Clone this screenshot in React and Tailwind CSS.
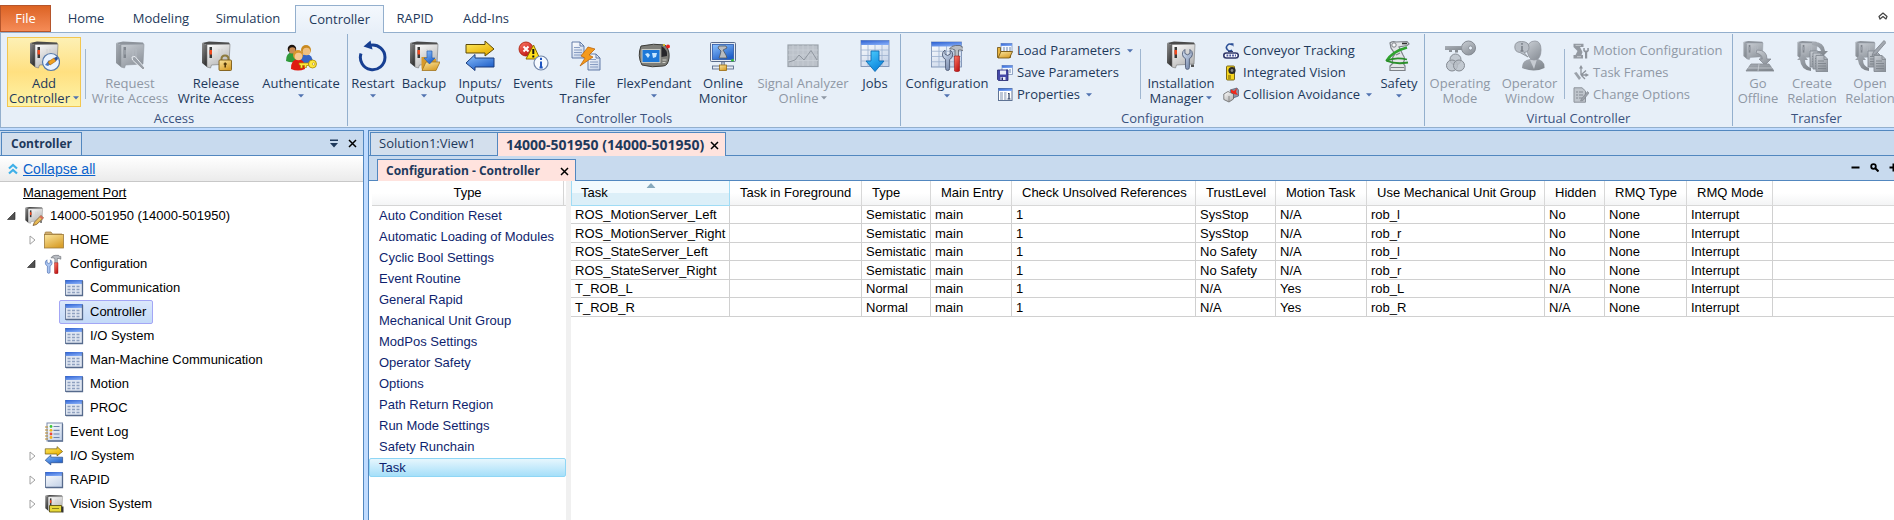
import React from "react";

const GRADIENTS = [
  ["front", "#ffffff", "#b4b4b4"],
  ["side", "#8f8f8f", "#333333"],
  ["gray", "#c9ced4", "#8f959d"],
  ["grayDark", "#a9afb7", "#82888f"],
  ["yellow", "#fff06a", "#e8ae00"],
  ["blue", "#8fc4ff", "#1f5fc8"],
  ["header", "#2b5fd0", "#7fa8f5"],
  ["gold", "#fbe6a0", "#d9a02c"],
  ["sky", "#4fd0ff", "#0a84dc"],
  ["red", "#ff7a66", "#c01818"],
  ["sheet", "#ffffff", "#c9d6ea"],
  ["steel", "#dce8f8", "#7b8daf"],
];

function Gradients() {
  return (
    <svg className="absolute size-0" aria-hidden="true">
      <defs>
        {GRADIENTS.map(([id, from, to]) => (
          <linearGradient key={id} id={id} x1="0" y1="0" x2="0.6" y2="1">
            <stop offset="0" stopColor={from} />
            <stop offset="1" stopColor={to} />
          </linearGradient>
        ))}
      </defs>
    </svg>
  );
}

function Svg32({ children }) {
  return (
    <svg viewBox="0 0 32 32" className="size-8 shrink-0" aria-hidden="true">
      {children}
    </svg>
  );
}

function Svg16({ children }) {
  return (
    <svg viewBox="0 0 16 16" className="size-4 shrink-0" aria-hidden="true">
      {children}
    </svg>
  );
}

function Svg20({ children }) {
  return (
    <svg viewBox="0 0 20 20" className="size-5 shrink-0" aria-hidden="true">
      {children}
    </svg>
  );
}

function Cabinet({ muted = false, transform }) {
  return (
    <g transform={transform}>
      <path d="M2 3 L9 1.500 L29 2.500 L30 4.500 L7 5z" fill={muted ? "#8e949c" : "#4a4a4a"} />
      <path d="M2 3 L7 5 L7 27 L2 23z" fill={muted ? "url(#grayDark)" : "url(#side)"} />
      <path d="M7 4.500 L30 4.200 L29 24 L11.500 25 L10.500 28 L7 27z" fill={muted ? "url(#gray)" : "url(#front)"} stroke={muted ? "#9097a0" : "#777"} strokeWidth=".6" />
      <path d="M26 24.500 h3 v2.500 h-3z" fill={muted ? "#8e949c" : "#555"} />
      <path d="M9.500 7 h2.500 v11 h-2.500z" fill={muted ? "#80868e" : "#3a3a3a"} />
      <path d="M9.500 10 h2.500 v4.500 h-2.500z" fill={muted ? "#989ea6" : "#f04a20"} />
      <path d="M19 9 v10 M22 9 v10" stroke={muted ? "#b3b9c1" : "#d2d2d2"} strokeWidth="1" />
    </g>
  );
}

function Wrench({ transform, fill = "url(#steel)", stroke = "#56627c" }) {
  return (
    <path
      transform={transform}
      d="M3 0.5 A5.4 5.4 0 0 0 3.6 10 L3.6 19 Q3.6 21 5.6 21 Q7.6 21 7.6 19 L7.6 10 A5.4 5.4 0 0 0 8.2 0.5 L8.2 4.6 L5.6 6 L3 4.6z"
      fill={fill}
      stroke={stroke}
      strokeWidth="1"
    />
  );
}

function Hammer({ transform }) {
  return (
    <g transform={transform}>
      <path d="M0 4 Q2 0.5 6 0.5 L11 0.5 L12 2 L14 2 L14 6 L11.5 5 L9 5 L9 12 L5.5 12 L5.5 5 Q3 3.5 0 4z" fill="#b9bdc3" stroke="#5b6068" strokeWidth=".8" />
      <path d="M5 11 h5 v15 q-2.500 1.500 -5 0z" fill="url(#red)" stroke="#9a1515" strokeWidth=".6" />
    </g>
  );
}

function Sheet({ x, y, w, h }) {
  const cols = [1, 2, 3].map((n) => x + (w * n) / 4);
  const rows = [1, 2, 3].map((n) => y + 4 + ((h - 4) * n) / 4);
  return (
    <g>
      <rect x={x} y={y} width={w} height={h} fill="url(#sheet)" stroke="#6f86ab" strokeWidth=".8" />
      {cols.map((c) => (
        <path key={c} d={`M${c} ${y + 4} V${y + h}`} stroke="#9db1cf" strokeWidth=".8" />
      ))}
      {rows.map((r) => (
        <path key={r} d={`M${x} ${r} H${x + w}`} stroke="#9db1cf" strokeWidth=".8" />
      ))}
      <rect x={x} y={y} width={w} height="4.500" fill="url(#header)" />
    </g>
  );
}

function Page({ x, y, muted }) {
  return (
    <g transform={`translate(${x} ${y})`}>
      <path d="M0 0 h8 l4 4 v12 h-12z" fill={muted ? "url(#gray)" : "url(#sheet)"} stroke={muted ? "#858b93" : "#56709f"} strokeWidth=".9" />
      <path d="M8 0 v4 h4" fill="none" stroke={muted ? "#858b93" : "#56709f"} strokeWidth=".9" />
      <path d="M2 5.500 h6 M2 8 h8 M2 10.500 h8 M2 13 h8" stroke={muted ? "#7d838b" : "#7f95bd"} strokeWidth=".9" />
    </g>
  );
}

function Person({ transform, skin, hair, shirt }) {
  return (
    <g transform={transform}>
      <path d="M0 20 Q0 10 7 10 Q14 10 14 20 Q7 23 0 20z" fill={shirt} />
      <circle cx="7" cy="6" r="5" fill={hair} />
      <circle cx="7.500" cy="7.500" r="3.800" fill={skin} />
    </g>
  );
}

const AddControllerIcon = () => (
  <Svg32>
    <Cabinet />
    <circle cx="23" cy="22" r="8.500" fill="#e9f3ff" stroke="#5478a8" strokeWidth="1.200" />
    <path d="M17 25 L21 20 L24 23 L20 26z" fill="#4a78c0" />
    <path d="M20 22 L26 18 L28 21 L22 25z" fill="#f0a020" stroke="#a55f00" strokeWidth=".6" />
    <path d="M26 18 L29 16.500 L30 19 L28 21z" fill="#2b4f96" />
  </Svg32>
);
const RequestIcon = () => (
  <Svg32>
    <Cabinet muted />
    <path d="M18 17 L21 16.500 L31 28 L29 30 L18.500 20z" fill="#9ba1a9" stroke="#f1f4f8" strokeWidth=".9" />
  </Svg32>
);
const ReleaseIcon = () => (
  <Svg32>
    <Cabinet />
    <path d="M21.500 21 v-2 q0 -3.500 3.500 -3.500 q3.500 0 3.500 3.500 v2" fill="none" stroke="#8d7a3d" strokeWidth="2" />
    <rect x="19" y="20" width="12.500" height="10.500" rx="1" fill="url(#gold)" stroke="#7c5a15" strokeWidth=".9" />
    <path d="M25.200 22.500 v5 M23.700 24 h3" stroke="#4a3207" strokeWidth="1.500" />
  </Svg32>
);
const AuthenticateIcon = () => (
  <Svg32>
    <Person transform="translate(1 4) scale(.85)" skin="#c98b53" hair="#1c1410" shirt="#2f9a3a" />
    <Person transform="translate(14 4) scale(1)" skin="#f0c080" hair="#c98a20" shirt="#3564c4" />
    <Person transform="translate(6 9) scale(1)" skin="#f6c890" hair="#d8952d" shirt="#e01b10" />
    <circle cx="27.500" cy="24" r="4" fill="#ffe83a" stroke="#a98500" strokeWidth=".8" />
    <circle cx="28.600" cy="24" r="1.200" fill="#fff" stroke="#a98500" strokeWidth=".6" />
    <path d="M14 23 h9.500 v2.500 h-2 v2 h-2 v-2 h-2 v2.500 h-2 v-2.500 l-1.500 -1z" fill="#ffe83a" stroke="#a98500" strokeWidth=".7" />
  </Svg32>
);
const RestartIcon = () => (
  <Svg32>
    <path d="M4 13.500 A12.300 12.300 0 1 0 14 5.200" fill="none" stroke="#173f92" strokeWidth="3" />
    <path d="M6.500 6.500 L13.500 .5 L15.500 9.500z" fill="#173f92" />
  </Svg32>
);
const BackupIcon = () => (
  <Svg32>
    <Cabinet />
    <path d="M13.500 28 V17 h5 l1.500 2 h8 v3 l-3 8 h-11z" fill="#d79a2b" />
    <path d="M14 30.500 L18 22 h14 L28 30.500z" fill="url(#gold)" stroke="#9a6a10" strokeWidth=".7" />
    <path d="M19 11 h5 v7 h3 l-5.500 6 l-5.500 -6 h3z" fill="url(#blue)" stroke="#2a5fb0" strokeWidth=".7" />
  </Svg32>
);
const InOutArrows = () => (
  <>
    <path d="M2 4.500 H21 V1 L30 9 L21 16 V13 H2z" fill="url(#yellow)" stroke="#5d4a08" strokeWidth="1" />
    <path d="M30 18 H11 V14.500 L2 23 L11 30.500 V27 H30z" fill="url(#blue)" stroke="#1a3c7c" strokeWidth="1" />
  </>
);
const InOutIcon = () => (
  <Svg32>
    <InOutArrows />
  </Svg32>
);
const EventsIcon = () => (
  <Svg32>
    <circle cx="9" cy="9" r="7" fill="url(#red)" stroke="#a81500" strokeWidth=".8" />
    <path d="M6.500 6.500 L11.500 11.500 M11.500 6.500 L6.500 11.500" stroke="#fff" strokeWidth="2" />
    <path d="M16.500 5 L23 19 H9z" fill="#ffe01a" stroke="#8a6c00" strokeWidth="1" strokeLinejoin="round" />
    <path d="M16.300 9 v5 M16.300 15.500 v2" stroke="#111" strokeWidth="2" />
    <circle cx="24" cy="23" r="7" fill="#f6faff" stroke="#7186a8" strokeWidth="1.200" />
    <path d="M24 21.500 v6 M24 17.800 v2.200 M22.500 27.500 h3.200" stroke="#1f55c0" strokeWidth="2" />
  </Svg32>
);
const FileTransferIcon = () => (
  <Svg32>
    <Page x={3} y={2} />
    <Page x={19} y={14} />
    <path d="M19 7 L26 9 L20 15 L24 17 L11 26 L16 18 L12 16z" fill="#f59a1c" stroke="#b65c00" strokeWidth=".7" />
  </Svg32>
);
const FlexPendantIcon = () => (
  <Svg32>
    <path d="M3 6 Q16 3 27 5 Q32 10 31 18 Q30 26 25 26 Q14 28 4 25 Q-1 16 3 6z" fill="#7d7d78" stroke="#3d3d3a" strokeWidth="1" />
    <rect x="4" y="9.500" width="18" height="13" fill="#1d78d8" stroke="#c8c8c0" strokeWidth="1" />
    <path d="M7 14 l3 -1 l2 2 l-2 3z M14 13 l5 0 l-1 4 l-3 1z" fill="#c6e6ff" />
    <path d="M23.500 6 q6.500 4 5.500 10 l-5.500 1z" fill="#26262a" />
    <circle cx="30" cy="6.500" r="2" fill="#e8221a" />
    <circle cx="26" cy="5" r="1" fill="#f4d21a" />
    <path d="M24.500 20 h4 M24.500 22.500 h3" stroke="#d0d0c8" strokeWidth="1" />
  </Svg32>
);
const OnlineMonitorIcon = () => (
  <Svg32>
    <rect x="3.500" y="2.500" width="25" height="19" rx="1" fill="#e6ebf2" stroke="#5a6c8c" strokeWidth="1" />
    <rect x="5.500" y="4.500" width="21" height="15" fill="url(#blue)" stroke="#2b57a8" strokeWidth=".8" />
    <path d="M12 6 h7 l1 2 l-4 2 l3 5 l1 3 h-8 l1 -3 l1 -4 l-3 -3z" fill="#b9bcc0" stroke="#4f5560" strokeWidth=".8" />
    <circle cx="25.500" cy="20.200" r="1.300" fill="#2fc02f" />
    <path d="M14.500 22 h3 v4 h-3z" fill="#aeb9ca" stroke="#5a6c8c" strokeWidth=".6" />
    <rect x="5.500" y="26" width="21" height="3" fill="#e6ebf2" stroke="#5a6c8c" strokeWidth=".9" />
    <rect x="12.500" y="25" width="7" height="5.500" fill="url(#gold)" stroke="#9a6a10" strokeWidth=".8" />
  </Svg32>
);
const SignalIcon = () => (
  <Svg32>
    <rect x="1" y="5" width="30" height="21.500" fill="#bcc2ca" stroke="#9ba2ab" strokeWidth="1.200" />
    <path d="M6 5 v21 M11 5 v21 M16 5 v21 M21 5 v21 M26 5 v21 M1 10 h30 M1 15 h30 M1 20.500 h30" stroke="#ccd1d8" strokeWidth=".7" />
    <path d="M2 22 L8 20 L12 15 L17 20 L24 10.500 L30 20" fill="none" stroke="#8f969f" strokeWidth="1" />
  </Svg32>
);
const JobsIcon = () => (
  <Svg32>
    <Sheet x={2} y={0.5} w={28} h={26} />
    <path d="M12 11 h8 v10 h5 L16 31.500 L7 21 h5z" fill="url(#sky)" stroke="#0d6cb4" strokeWidth=".9" />
  </Svg32>
);
const ConfigurationIcon = () => (
  <Svg32>
    <Sheet x={0.5} y={2} w={30} h={25} />
    <Wrench transform="translate(11 9.500)" />
    <Hammer transform="translate(18.500 5)" />
  </Svg32>
);
const InstallationIcon = () => (
  <Svg32>
    <Cabinet />
    <Wrench transform="translate(17 9) scale(.97)" />
  </Svg32>
);
const SafetyIcon = () => (
  <Svg32>
    <path d="M7 3 Q9 .8 13 2 L24 1.500 L26 4 L24 5.500 L16 7 L20 15 Q23 19 20 23 L22 26 V30.500 H7 V26 L10 23 Q8 18 12 14 L8 8z" fill="#e3e5e8" stroke="#7c8187" strokeWidth="1.200" />
    <path d="M19 3.500 h5" stroke="#333" strokeWidth="1.600" />
    <circle cx="11" cy="5" r="2.200" fill="#f8f9fa" stroke="#7c8187" />
    <path d="M8 27.500 h13 M13 15 l4 -2" stroke="#7c8187" strokeWidth="1.200" />
    <path d="M24 7.500 Q9 11.500 3.500 21" fill="none" stroke="#2fa32f" strokeWidth="2.600" />
    <path d="M3 21 Q12 16.500 24 19.500 M4 21 Q13 24.500 25 22.500" fill="none" stroke="#2b8f2b" strokeWidth="1.800" />
  </Svg32>
);
const OperatingModeIcon = () => (
  <Svg32>
    <circle cx="24.500" cy="8" r="7" fill="url(#gray)" stroke="#858b93" strokeWidth="1" />
    <circle cx="26.500" cy="8" r="2" fill="#e7eff8" stroke="#858b93" strokeWidth=".8" />
    <path d="M1 6 H18 V10 H14 V12.500 H11 V10 H8 V12 H5 V10 H1z" fill="url(#grayDark)" />
    <circle cx="11.500" cy="19.500" r="5.500" fill="#b9bfc7" fillOpacity=".8" stroke="#858b93" />
    <circle cx="8" cy="25.500" r="5.500" fill="#b9bfc7" fillOpacity=".8" stroke="#858b93" />
    <circle cx="15" cy="25.500" r="5.500" fill="#b9bfc7" fillOpacity=".8" stroke="#858b93" />
  </Svg32>
);
const OperatorWindowIcon = () => (
  <Svg32>
    <path d="M8 28 Q8 20 16 19 Q31 17 30.500 28 Q20 33 8 28z" fill="url(#grayDark)" />
    <path d="M16 20 L20 29 L23 19" fill="#c6cbd2" />
    <path d="M13 9 Q14 1 21 1 Q27 1 27 10 Q27 20 20 20 Q14 20 13 9z" fill="url(#gray)" stroke="#90969e" strokeWidth=".8" />
    <path d="M7.500 1.500 Q15 1.500 15 7.500 Q15 12 10 12.500 L14 17 L6 12.500 Q.8 12 .8 7 Q.8 1.500 7.500 1.500z" fill="#b9bfc7" stroke="#8d939b" strokeWidth=".9" />
    <path d="M8 6 v5 M8 3 v1.800 M6.500 11 h3" stroke="#7b8189" strokeWidth="1.600" />
  </Svg32>
);
const GoOfflineIcon = () => (
  <Svg32>
    <Cabinet muted transform="scale(.7)" />
    <path d="M15 10 Q25 10 25 19 H29 L23 25 L17 19 H20.500 Q20 14 14 13z" fill="url(#gray)" stroke="#868c94" strokeWidth=".8" />
    <path d="M9 24 H27 L32 31 H4z" fill="url(#grayDark)" stroke="#858b93" strokeWidth=".8" />
    <path d="M17 24 L16 31 M6 28 h24" stroke="#c9ced4" strokeWidth=".8" />
  </Svg32>
);
const CreateRelationIcon = () => (
  <Svg32>
    <Cabinet muted transform="scale(.7)" />
    <path d="M16 2 Q28 1 29 11 H32 L27 16 L22 11 H25 Q24 6 16 5z" fill="url(#grayDark)" />
    <path d="M7 14 L12 20 H9 Q9 26 15 28 V31 Q5 30 4 20 H1z" fill="url(#grayDark)" />
    <Page x={14} y={11} muted />
    <Page x={17} y={13} muted />
    <Page x={20} y={15.500} muted />
  </Svg32>
);
const OpenRelationIcon = () => (
  <Svg32>
    <Cabinet muted transform="scale(.7)" />
    <path d="M7 14 L12 20 H9 Q9 26 15 28 V31 Q5 30 4 20 H1z" fill="url(#grayDark)" />
    <Page x={14} y={11} muted />
    <Page x={20} y={15.500} muted />
    <path d="M30 .5 L32 2.500 L22 14 L18 15.500 L19.500 12z" fill="#a2a8b0" stroke="#7d838b" strokeWidth=".8" />
  </Svg32>
);

const LoadParametersIcon = () => (
  <Svg16>
    <rect x="4" y=".5" width="11" height="9" fill="#f4f8ff" stroke="#7d93b8" strokeWidth=".8" />
    <path d="M4 .5 h11 v2.500 h-11z" fill="url(#header)" />
    <path d="M6 5 h2 M9 5 h2 M12 5 h2 M6 7 h2 M9 7 h2 M12 7 h2" stroke="#6f86ab" />
    <path d="M.5 4.500 h3 v4 h10 v6 h-13z" fill="#e8b440" stroke="#6f4f0c" strokeWidth=".8" />
    <path d="M1 15 L4 8.500 H15.500 L12.500 15z" fill="url(#gold)" stroke="#6f4f0c" strokeWidth=".8" />
  </Svg16>
);
const SaveParametersIcon = () => (
  <Svg16>
    <rect x="5" y=".5" width="10.500" height="9" fill="#f4f8ff" stroke="#7d93b8" strokeWidth=".8" />
    <path d="M5 .5 h10.500 v2.500 h-10.500z" fill="url(#header)" />
    <path d="M9 5 h2 M12 5 h2 M12 7 h2" stroke="#6f86ab" />
    <path d="M.5 5 h10.500 v10.500 h-9.500 l-1 -1z" fill="#4548a8" stroke="#25276c" strokeWidth=".8" />
    <path d="M3 5.500 h6 v4 h-6z M3.500 12 h5 v3 h-5z" fill="#e8ecf8" />
    <path d="M4.500 12.500 h1.500 v2.500 h-1.500z" fill="#25276c" />
  </Svg16>
);
const PropertiesIcon = () => (
  <Svg16>
    <rect x="1.500" y="1.500" width="13.500" height="12" fill="#fff" stroke="#5f7394" />
    <path d="M1.500 1.500 h13.500 v2.500 h-13.500z" fill="url(#header)" />
    <path d="M3 6 h3 M3 8 h3 M3 10 h3 M3 12 h3 M7 6 h2.500 M7 8 h2.500 M7 10 h2.500 M7 12 h2.500" stroke="#7d8fae" />
    <path d="M12 6 v6 M10.500 12 h3 M11 6.500 h1" stroke="#2a3c60" strokeWidth="1.200" />
  </Svg16>
);
const ConveyorIcon = () => (
  <Svg16>
    <path d="M9 2 A3.300 3.300 0 1 0 9 7" fill="none" stroke="#2b4f96" strokeWidth="1.600" />
    <path d="M7.500 .2 h3 v3.500z" fill="#2b4f96" />
    <rect x=".8" y="10" width="14.500" height="5" rx="2.500" fill="#fff" stroke="#30376a" strokeWidth="1.600" />
    <path d="M3.500 12.500 h9.500" stroke="#4a55a0" strokeWidth="2" strokeDasharray="1.800 1" />
    <path d="M5 8.500 h5" stroke="#30376a" />
  </Svg16>
);
const VisionIcon = () => (
  <Svg16>
    <rect x="3.500" y="1" width="8" height="14" rx="1" fill="#f6d51e" stroke="#6f5b08" strokeWidth=".9" />
    <circle cx="9" cy="5.500" r="3.600" fill="#2a2a2a" />
    <circle cx="9" cy="5.500" r="1.400" fill="#8a8a8a" />
    <path d="M5 11 h3 M5 13 h3" stroke="#6f5b08" />
  </Svg16>
);
const CollisionIcon = () => (
  <Svg16>
    <path d="M7 3 L14 1 L15.500 3 V9 L10 11z" fill="#8b95a8" stroke="#4d5669" strokeWidth=".7" />
    <path d="M8 2.500 l3 1.500 l3 -3 l-1 4 l2 3 l-4 -1 l-3 2z" fill="#f0281a" />
    <path d="M.8 7 L5 4.500 L10.500 7 V12 L6 15 L.8 12.500z" fill="url(#front)" stroke="#555" strokeWidth=".7" />
    <path d="M6 9 V15" stroke="#888" />
  </Svg16>
);
const MotionConfigIcon = () => (
  <Svg16>
    <path d="M.5 .8 H10.500 V4 H7 L9.500 9 L8.500 12 H10 V15.500 H.5 V12 H2.500 L4.500 8 L.5 4z" fill="#9399a1" />
    <path d="M2.500 2.400 H8 M4 13.700 H8" stroke="#c9ced4" strokeWidth=".9" />
    <path d="M10.300 5 V8 L12 9.500 V15.500 H14.200 V9.500 L15.800 8 V5 H14.300 V7.500 H11.800 V5z" fill="#8d939b" />
  </Svg16>
);
const TaskFramesIcon = () => (
  <Svg16>
    <path d="M8 10 V2.500 M8 10 H14 M8 10 L13 5.500 M8 10 L12 14" stroke="#8d939b" strokeWidth="1.300" fill="none" />
    <path d="M6 3.500 L8 0 L10 3.500z M12.500 8 L16 10 L12.500 12z" fill="#8d939b" />
    <path d="M1 8 L3.500 7 L8 13 L6 15z" fill="#9ba1a9" />
  </Svg16>
);
const ChangeOptionsIcon = () => (
  <Svg16>
    <path d="M1 .8 H9 L12.500 4 V15.200 H1z" fill="#bfc5cc" stroke="#8d939b" />
    <path d="M3 5 h2 M6 5 h4 M3 8 h2 M6 8 h4 M3 11 h2 M6 11 h3" stroke="#858b93" strokeWidth="1.200" />
    <path d="M14.500 4.500 L16 6 L10 13.500 L7.500 14 L8.500 11.800z" fill="#9ba1a9" stroke="#7d838b" strokeWidth=".6" />
  </Svg16>
);

const TreeControllerIcon = () => (
  <Svg20>
    <Cabinet transform="scale(.62)" />
    <path d="M17 9.500 L19.500 12 L12.500 18.500 L9 19.500 L10.500 16z" fill="url(#gold)" stroke="#7c5a35" strokeWidth=".8" />
    <path d="M17 9.500 L19.500 12 L18 13.300 L15.500 11z" fill="#d86a5a" />
  </Svg20>
);
const FolderIcon = () => (
  <Svg20>
    <path d="M1 3 Q1 2 2 2 H7 L8.500 4 H18 V6 H1z" fill="#cfae70" stroke="#9d7a3b" strokeWidth=".7" />
    <rect x=".5" y="4.500" width="19" height="13.500" fill="url(#gold)" stroke="#9d7a3b" strokeWidth=".8" />
  </Svg20>
);
const ToolsIcon = () => (
  <Svg20>
    <Wrench transform="translate(1 5.500) scale(.66)" fill="#a9c4f0" stroke="#4a6cb0" />
    <Hammer transform="translate(7 1) scale(.7)" />
  </Svg20>
);
const TableIcon = () => (
  <Svg20>
    <rect x="1.500" y="2.500" width="17" height="15" fill="#dfe6f1" stroke="#6c7f9f" />
    <path d="M1.500 2 h17 v4 h-17z" fill="url(#header)" />
    <path d="M3.500 8.500 h3 M8 8.500 h3 M12.500 8.500 h3 M3.500 11.500 h3 M8 11.500 h3 M12.500 11.500 h3 M3.500 14.500 h3 M8 14.500 h3 M12.500 14.500 h3" stroke="#8fa1c0" strokeWidth="1.600" />
    <path d="M18.500 3 V17.500 H2" fill="none" stroke="#566a8c" strokeWidth="1.300" />
  </Svg20>
);
const EventLogIcon = () => (
  <Svg20>
    <rect x="3" y="1" width="15.500" height="18" fill="url(#sheet)" stroke="#7a8cab" />
    <path d="M18.500 2 V19 H4" fill="none" stroke="#5f7394" strokeWidth="1.300" />
    <path d="M9.500 4.500 h6 M9.500 8.300 h6 M9.500 12 h6 M9.500 15.500 h6" stroke="#6f86ab" strokeWidth="1.200" />
    <circle cx="7" cy="4.500" r="1.400" fill="#3fc43a" />
    <circle cx="7" cy="8.300" r="1.400" fill="#f0b21a" />
    <circle cx="7" cy="12" r="1.400" fill="#e8453a" />
    <circle cx="7" cy="15.500" r="1.400" fill="#f0b21a" />
    <path d="M1 5 h3 M1 8 h3 M1 11 h3 M1 14 h3 M1 17 h3" stroke="#b98a2a" strokeWidth="1.200" />
  </Svg20>
);
const TreeInOutIcon = () => (
  <Svg20>
    <g transform="scale(.62)">
      <InOutArrows />
    </g>
  </Svg20>
);
const WindowIcon = () => (
  <Svg20>
    <rect x="1.500" y="2.500" width="17" height="15" fill="url(#sheet)" stroke="#6c7f9f" />
    <path d="M1.500 2 h17 v4 h-17z" fill="url(#header)" />
    <path d="M18.500 3 V17.500 H2" fill="none" stroke="#566a8c" strokeWidth="1.300" />
  </Svg20>
);
const TreeVisionIcon = () => (
  <Svg20>
    <Cabinet transform="scale(.62)" />
    <path d="M5.500 11.500 h12 v6.500 h-12z" fill="#e6d83a" stroke="#5d5410" strokeWidth=".9" />
    <path d="M17.500 12.500 h2 v6 h-2z" fill="#333" />
    <path d="M8 14.500 h7" stroke="#8b8118" />
  </Svg20>
);

function Caret({ muted }) {
  return (
    <svg viewBox="0 0 6 4" className="inline-block h-1 w-1.5 shrink-0" aria-hidden="true">
      <path d="M0 .3 h6 L3 3.500z" fill={muted ? "#8f98a5" : "#5072b0"} />
    </svg>
  );
}

function BigButton({ icon: Icon, lines, caret, disabled, active, width }) {
  const look = active
    ? "border-[#f3c64f] bg-linear-to-b from-[#fdf0b4] via-[#ffe080] to-[#fdf3a8] text-[#1e395b]"
    : disabled
      ? "border-transparent text-[#8f98a5]"
      : "border-transparent text-[#1e395b]";
  return (
    <button type="button" disabled={disabled} className={`flex h-[70px] shrink-0 flex-col items-center border pt-0.5 ${width} ${look}`}>
      <Icon />
      <span className="mt-1 block leading-[15px] whitespace-nowrap">{lines[0]}</span>
      <span className="flex h-[15px] items-center gap-[3px] leading-[15px] whitespace-nowrap">
        {lines[1]}
        {caret && (
          <span className={lines[1] ? "mb-0.5 flex" : "mb-1.5 flex"}>
            <Caret muted={disabled} />
          </span>
        )}
      </span>
    </button>
  );
}

function SmallButton({ icon: Icon, label, caret, disabled }) {
  return (
    <button type="button" disabled={disabled} className={`flex h-[22px] items-center gap-1 whitespace-nowrap ${disabled ? "text-[#8f98a5]" : "text-[#1e395b]"}`}>
      <Icon />
      {label}
      {caret && (
        <span className="ml-0.5 flex">
          <Caret />
        </span>
      )}
    </button>
  );
}

function Divider() {
  return <div className="mt-3 h-[50px] w-px shrink-0 bg-[#9fb6d0]" />;
}

function Group({ title, width, children }) {
  return (
    <section aria-label={title} className={`flex shrink-0 flex-col border-r border-[#93afcd] ${width}`}>
      <div className="flex h-[77px]">{children}</div>
      <div className="text-center leading-[15px] text-[#3b527e]">{title}</div>
    </section>
  );
}

function RibbonTabs() {
  const idle = [
    ["Home", "w-[70px]"],
    ["Modeling", "w-20"],
    ["Simulation", "w-[94px]"],
  ];
  const rest = [
    ["RAPID", "w-[62px]"],
    ["Add-Ins", "w-20"],
  ];
  return (
    <nav className="flex h-[33px] items-end border-b border-[#93afcd] bg-white pt-[5px] text-[#1e395b]">
      <button type="button" className="h-[27px] w-[51px] border border-[#b5552b] bg-linear-to-b from-[#dc6322] to-[#f58b56] text-white">
        File
      </button>
      {idle.map(([name, w]) => (
        <button type="button" key={name} className={`h-[27px] ${w}`}>
          {name}
        </button>
      ))}
      <button type="button" className="-mb-px h-7 w-[89px] border border-b-0 border-[#93afcd] bg-linear-to-b from-[#f4f8fd] to-[#e7eff8]">
        Controller
      </button>
      {rest.map(([name, w]) => (
        <button type="button" key={name} className={`h-[27px] ${w}`}>
          {name}
        </button>
      ))}
      <button type="button" aria-label="Collapse ribbon" className="mr-[3px] mb-2 ml-auto flex size-4 items-center justify-center">
        <svg viewBox="0 0 10 8" className="h-2 w-2.5" aria-hidden="true">
          <path d="M1 4.500 L5 1 L9 4.500 L8 7 L5 4.500 L2 7z" fill="#fff" stroke="#444" strokeWidth="1.200" strokeLinejoin="round" />
        </svg>
      </button>
    </nav>
  );
}

function Ribbon() {
  return (
    <div className="flex overflow-hidden border-b border-l border-[#93afcd] bg-[#e7eff8] pt-px pb-px">
      <Group title="Access" width="w-[347px]">
        <div className="flex pt-[3px] pl-1.5">
          <BigButton active icon={AddControllerIcon} lines={["Add", "Controller"]} caret width="w-[74px]" />
          <div className="flex pr-px pl-1">
            <Divider />
          </div>
          <BigButton disabled icon={RequestIcon} lines={["Request", "Write Access"]} width="w-[86px]" />
          <BigButton icon={ReleaseIcon} lines={["Release", "Write Access"]} width="w-[86px]" />
          <BigButton icon={AuthenticateIcon} lines={["Authenticate", ""]} caret width="w-[84px]" />
        </div>
      </Group>
      <Group title="Controller Tools" width="w-[553px]">
        <div className="flex pt-[3px]">
          <BigButton icon={RestartIcon} lines={["Restart", ""]} caret width="w-[50px]" />
          <BigButton icon={BackupIcon} lines={["Backup", ""]} caret width="w-[52px]" />
          <BigButton icon={InOutIcon} lines={["Inputs/", "Outputs"]} width="w-[60px]" />
          <BigButton icon={EventsIcon} lines={["Events", ""]} width="w-[46px]" />
          <BigButton icon={FileTransferIcon} lines={["File", "Transfer"]} width="w-[58px]" />
          <BigButton icon={FlexPendantIcon} lines={["FlexPendant", ""]} caret width="w-20" />
          <BigButton icon={OnlineMonitorIcon} lines={["Online", "Monitor"]} width="w-[58px]" />
          <BigButton disabled icon={SignalIcon} lines={["Signal Analyzer", "Online"]} caret width="w-[102px]" />
          <BigButton icon={JobsIcon} lines={["Jobs", ""]} width="w-[42px]" />
        </div>
      </Group>
      <Group title="Configuration" width="w-[524px]">
        <div className="flex pt-[3px]">
          <BigButton icon={ConfigurationIcon} lines={["Configuration", ""]} caret width="w-[92px]" />
          <div className="flex w-[147px] flex-col pt-[3px] pl-1">
            <SmallButton icon={LoadParametersIcon} label="Load Parameters" caret />
            <SmallButton icon={SaveParametersIcon} label="Save Parameters" />
            <SmallButton icon={PropertiesIcon} label="Properties" caret />
          </div>
          <Divider />
          <BigButton icon={InstallationIcon} lines={["Installation", "Manager"]} caret width="w-20" />
          <div className="flex w-[155px] flex-col pt-[3px] pl-0.5">
            <SmallButton icon={ConveyorIcon} label="Conveyor Tracking" />
            <SmallButton icon={VisionIcon} label="Integrated Vision" />
            <SmallButton icon={CollisionIcon} label="Collision Avoidance" caret />
          </div>
          <BigButton icon={SafetyIcon} lines={["Safety", ""]} caret width="w-[46px]" />
        </div>
      </Group>
      <Group title="Virtual Controller" width="w-[308px]">
        <div className="flex pt-[3px]">
          <BigButton disabled icon={OperatingModeIcon} lines={["Operating", "Mode"]} width="w-[70px]" />
          <BigButton disabled icon={OperatorWindowIcon} lines={["Operator", "Window"]} width="w-[69px]" />
          <Divider />
          <div className="flex flex-col pt-[3px] pl-2">
            <SmallButton disabled icon={MotionConfigIcon} label="Motion Configuration" />
            <SmallButton disabled icon={TaskFramesIcon} label="Task Frames" />
            <SmallButton disabled icon={ChangeOptionsIcon} label="Change Options" />
          </div>
        </div>
      </Group>
      <Group title="Transfer" width="w-[168px]">
        <div className="flex pt-[3px]">
          <BigButton disabled icon={GoOfflineIcon} lines={["Go", "Offline"]} width="w-[50px]" />
          <BigButton disabled icon={CreateRelationIcon} lines={["Create", "Relation"]} width="w-[58px]" />
          <BigButton disabled icon={OpenRelationIcon} lines={["Open", "Relation"]} width="w-[58px]" />
        </div>
      </Group>
    </div>
  );
}

function CloseGlyph() {
  return (
    <svg viewBox="0 0 9 9" className="size-[9px]" aria-hidden="true">
      <path d="M1 1 L8 8 M8 1 L1 8" stroke="#000" strokeWidth="1.500" />
    </svg>
  );
}

const TREE = [
  { level: 0, state: "open", icon: TreeControllerIcon, label: "14000-501950 (14000-501950)" },
  { level: 1, state: "closed", icon: FolderIcon, label: "HOME" },
  { level: 1, state: "open", icon: ToolsIcon, label: "Configuration" },
  { level: 2, icon: TableIcon, label: "Communication" },
  { level: 2, icon: TableIcon, label: "Controller", selected: true },
  { level: 2, icon: TableIcon, label: "I/O System" },
  { level: 2, icon: TableIcon, label: "Man-Machine Communication" },
  { level: 2, icon: TableIcon, label: "Motion" },
  { level: 2, icon: TableIcon, label: "PROC" },
  { level: 1, icon: EventLogIcon, label: "Event Log" },
  { level: 1, state: "closed", icon: TreeInOutIcon, label: "I/O System" },
  { level: 1, state: "closed", icon: WindowIcon, label: "RAPID" },
  { level: 1, state: "closed", icon: TreeVisionIcon, label: "Vision System" },
];

const INDENT = ["pl-[7px]", "pl-[27px]", "pl-[47px]"];

function Expander({ state }) {
  return (
    <svg viewBox="0 0 10 10" className="size-2.5 shrink-0" aria-hidden="true">
      {state === "open" && <path d="M8 1 V8.500 H.5z" fill="#505050" stroke="#222" strokeWidth=".6" />}
      {state === "closed" && <path d="M3 1 L8 5 L3 9.200z" fill="#fff" stroke="#a0a0a0" />}
    </svg>
  );
}

function ControllerPanel() {
  return (
    <aside className="flex w-[364px] shrink-0 flex-col border-t border-r border-[#5287bf] bg-white">
      <header className="flex h-[25px] items-end border-b border-[#5287bf] bg-[#c8daee] pl-px">
        <h2 className="flex h-[23px] w-[81px] items-center justify-center border border-b-0 border-[#5287bf] bg-[#d3dfed] font-[Open_Sans,sans-serif] text-[12px] font-bold text-[#1e395b]">
          Controller
        </h2>
        <div className="mr-1.5 ml-auto flex h-6 items-center gap-2.5">
          <button type="button" aria-label="Panel options" className="flex">
            <svg viewBox="0 0 8 9" className="h-[9px] w-2" aria-hidden="true">
              <path d="M0 .5 h8 v1.500 h-8z M0 4 h8 L4 8.500z" fill="#1e395b" />
            </svg>
          </button>
          <button type="button" aria-label="Close panel" className="flex">
            <CloseGlyph />
          </button>
        </div>
      </header>
      <div className="flex h-[26px] items-center gap-[5px] border-b border-[#c8c8c8] bg-linear-to-b from-white to-[#ebebeb] pt-px pl-2">
        <svg viewBox="0 0 10 12" className="h-3 w-2.5" aria-hidden="true">
          <path d="M1 5.500 L5 2 L9 5.500 M1 10.500 L5 7 L9 10.500" fill="none" stroke="#3fb0e8" strokeWidth="2.200" />
        </svg>
        <a href="#collapse" className="text-[14px] leading-4 text-[#0a62cc] underline">
          Collapse all
        </a>
      </div>
      <div className="flex h-[22px] items-center pl-[23px]">
        <a href="#management" className="text-black underline">
          Management Port
        </a>
      </div>
      <ul>
        {TREE.map(({ level, state, icon: Icon, label, selected }) => (
          <li key={level + label} className={`flex h-6 items-center ${INDENT[level]}`}>
            <Expander state={state} />
            <button type="button" className={`flex h-6 items-center gap-1.5 rounded-xs border pr-1.5 whitespace-nowrap ${level === 2 ? "ml-0.5 pl-1" : "pl-1.5"} ${selected ? "border-[#a3a6f5] bg-linear-to-b from-[#dbe8fb] to-[#c3daf8]" : "border-transparent"}`}>
              <Icon />
              {label}
            </button>
          </li>
        ))}
      </ul>
    </aside>
  );
}

const TYPES = [
  "Auto Condition Reset",
  "Automatic Loading of Modules",
  "Cyclic Bool Settings",
  "Event Routine",
  "General Rapid",
  "Mechanical Unit Group",
  "ModPos Settings",
  "Operator Safety",
  "Options",
  "Path Return Region",
  "Run Mode Settings",
  "Safety Runchain",
  "Task",
];

function TypeList() {
  return (
    <div className="w-[202px] shrink-0 border-r-5 border-[#f0f0f0]">
      <div className="ml-[3px] h-[25px] border-b border-[#d5d5d5] bg-linear-to-b from-white from-50% to-[#f4f5f6]">
        <div className="mr-0.5 flex h-6 items-center justify-center border-r border-[#d5d5d5]">Type</div>
      </div>
      <ul className="text-[#0f1f6e]">
        {TYPES.map((type) => (
          <li key={type} className="h-[21px] pb-0.5">
            <button
              type="button"
              className={`flex h-[19px] w-full items-center rounded-xs border pl-[9px] whitespace-nowrap ${type === "Task" ? "border-[#8fd6f5] bg-linear-to-b from-[#e6f6fd] to-[#a5dff9]" : "border-transparent"}`}
            >
              {type}
            </button>
          </li>
        ))}
      </ul>
    </div>
  );
}

const COLUMNS = [
  ["Task", "w-[159px]"],
  ["Task in Foreground", "w-[132px]"],
  ["Type", "w-[69px]"],
  ["Main Entry", "w-[81px]"],
  ["Check Unsolved References", "w-[184px]"],
  ["TrustLevel", "w-20"],
  ["Motion Task", "w-[91px]"],
  ["Use Mechanical Unit Group", "w-[178px]"],
  ["Hidden", "w-[60px]"],
  ["RMQ Type", "w-[82px]"],
  ["RMQ Mode", "w-[86px]"],
];

const ROWS = [
  ["ROS_MotionServer_Left", "", "Semistatic", "main", "1", "SysStop", "N/A", "rob_l", "No", "None", "Interrupt"],
  ["ROS_MotionServer_Right", "", "Semistatic", "main", "1", "SysStop", "N/A", "rob_r", "No", "None", "Interrupt"],
  ["ROS_StateServer_Left", "", "Semistatic", "main", "1", "No Safety", "N/A", "rob_l", "No", "None", "Interrupt"],
  ["ROS_StateServer_Right", "", "Semistatic", "main", "1", "No Safety", "N/A", "rob_r", "No", "None", "Interrupt"],
  ["T_ROB_L", "", "Normal", "main", "1", "N/A", "Yes", "rob_L", "N/A", "None", "Interrupt"],
  ["T_ROB_R", "", "Normal", "main", "1", "N/A", "Yes", "rob_R", "N/A", "None", "Interrupt"],
];

function TaskTable() {
  return (
    <div className="min-w-0 flex-1 overflow-hidden">
      <table className="w-full table-fixed border-separate border-spacing-0">
        <thead>
          <tr className="h-[25px]">
            {COLUMNS.map(([name, w], i) => (
              <th
                key={name}
                scope="col"
                className={`relative border-r border-b p-0 text-left font-normal whitespace-nowrap ${w} ${i === 0 ? "border-l border-[#a0dcf5] bg-linear-to-b from-[#f2fafe] from-50% to-[#dceff8] to-50% pl-[9px]" : "border-[#d8d8d8] bg-linear-to-b from-white from-50% to-[#f3f4f5] pl-2.5"}`}
              >
                {name}
                {i === 0 && (
                  <svg viewBox="0 0 9 5" className="absolute top-0.5 left-1/2 h-[5px] w-[9px] -translate-x-1/2" aria-hidden="true">
                    <path d="M4.500 0 L9 5 H0z" fill="#86a9bd" />
                  </svg>
                )}
              </th>
            ))}
            <td className="border-b border-[#d8d8d8] bg-linear-to-b from-white from-50% to-[#f3f4f5]" />
          </tr>
        </thead>
        <tbody>
          {ROWS.map((row) => (
            <tr key={row[0]} className="h-[18px] even:h-[19px]">
              {row.map((cell, i) => (
                <td key={COLUMNS[i][0]} className="border-r border-b border-[#d0d0d0] p-0 pl-1 leading-[17px] whitespace-nowrap">
                  {cell}
                </td>
              ))}
              <td className="border-b border-[#d0d0d0] p-0" />
            </tr>
          ))}
        </tbody>
      </table>
    </div>
  );
}

function DocumentArea() {
  return (
    <main className="flex min-w-0 flex-1 flex-col border-t border-l border-[#5287bf] bg-white">
      <div className="flex h-[25px] items-end border-b border-[#5287bf] bg-[#c8daee] pl-px font-[Open_Sans,sans-serif] text-[#1e395b]">
        <button type="button" className="flex h-[23px] w-[127px] items-center border border-r-0 border-b-0 border-[#5287bf] bg-[#d3dfed] pl-2 text-[13px]">
          Solution1:View1
        </button>
        <div className="-mb-px flex h-6 items-center gap-1.5 border border-b-0 border-[#5287bf] bg-[#ffe3de] pr-1.5 pl-2">
          <button type="button" className="text-[14px] font-bold whitespace-nowrap">
            14000-501950 (14000-501950)
          </button>
          <button type="button" aria-label="Close document" className="flex pt-0.5">
            <CloseGlyph />
          </button>
        </div>
      </div>
      <div className="flex h-[25px] items-end border-b border-[#5287bf] bg-[#c8daee] pl-2 font-[Open_Sans,sans-serif] text-[#1e395b]">
        <div className="-mb-px flex h-[22px] w-[199px] items-center justify-between border border-b-0 border-[#5287bf] bg-[#ffe3de] pr-1.5 pl-2">
          <button type="button" className="text-[12px] font-bold whitespace-nowrap">
            Configuration - Controller
          </button>
          <button type="button" aria-label="Close editor" className="flex pt-0.5">
            <CloseGlyph />
          </button>
        </div>
        <div className="-mr-1 mb-2 ml-auto flex items-center gap-2.5">
          <button type="button" aria-label="Zoom out" className="flex">
            <svg viewBox="0 0 9 9" className="size-[9px]" aria-hidden="true">
              <path d="M.5 4.500 h8" stroke="#000" strokeWidth="2" />
            </svg>
          </button>
          <button type="button" aria-label="Zoom" className="flex">
            <svg viewBox="0 0 9 9" className="size-[9px]" aria-hidden="true">
              <circle cx="3.500" cy="3.500" r="2.300" fill="none" stroke="#000" strokeWidth="1.800" />
              <path d="M5 5 L8.500 8.500" stroke="#000" strokeWidth="2" />
            </svg>
          </button>
          <button type="button" aria-label="Zoom in" className="flex">
            <svg viewBox="0 0 9 9" className="size-[9px]" aria-hidden="true">
              <path d="M.5 4.500 h8 M4.500 .5 v8" stroke="#000" strokeWidth="2" />
            </svg>
          </button>
        </div>
      </div>
      <div className="flex flex-1">
        <TypeList />
        <TaskTable />
      </div>
    </main>
  );
}

export default function App() {
  return (
    <div className="flex min-h-screen flex-col overflow-hidden bg-[#bfdbff] font-[Liberation_Sans,Arial,sans-serif] text-[13px] text-black">
      <Gradients />
      <div className="font-[Open_Sans,sans-serif]">
        <RibbonTabs />
        <Ribbon />
      </div>
      <div className="mt-0.5 flex flex-1 gap-1">
        <ControllerPanel />
        <DocumentArea />
      </div>
    </div>
  );
}
